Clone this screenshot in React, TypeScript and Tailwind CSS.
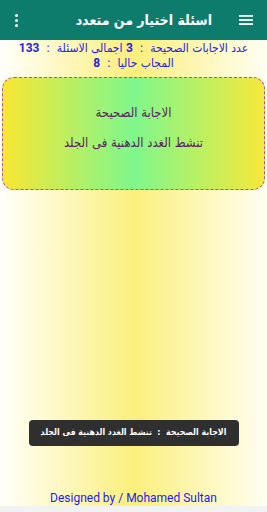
import React from "react";

export default function App() {
  const arabic = { fontFamily: '"DejaVu Sans Condensed", "DejaVu Sans", sans-serif' };
  const num = { fontFamily: "Roboto, sans-serif" };
  return (
    <div className="w-[267px] h-[512px] flex flex-col overflow-hidden" style={arabic}>
      <header dir="rtl" className="h-[40px] shrink-0 bg-[#0e7c6c] flex items-center pr-[14px] pl-[12px]">
        <svg width="14" height="10" viewBox="0 0 14 10" className="shrink-0">
          <rect x="0" y="0" width="14" height="1.8" fill="#fff" />
          <rect x="0" y="4.1" width="14" height="1.8" fill="#fff" />
          <rect x="0" y="8.2" width="14" height="1.8" fill="#fff" />
        </svg>
        <div className="mr-[27px] text-white font-bold text-[14px] leading-none whitespace-nowrap">اسئلة اختيار من متعدد</div>
        <div className="mr-auto flex flex-col gap-[2px] items-center w-[8px]">
          <span className="w-[3px] h-[3px] bg-white rounded-full" />
          <span className="w-[3px] h-[3px] bg-white rounded-full" />
          <span className="w-[3px] h-[3px] bg-white rounded-full" />
        </div>
      </header>
      <main className="flex-1 flex flex-col bg-[linear-gradient(to_right,#fffffb_0%,#fbef7c_50%,#fffef2_100%)]">
        <div dir="rtl" className="text-center text-[#2424e0] text-[12px] leading-[15px] pt-[1px] px-[4px] whitespace-nowrap">
          <div>عدد الاجابات الصحيحة &nbsp;:&nbsp; <span className="font-bold" style={num}>3</span> اجمالى الاسئلة &nbsp;:&nbsp; <span className="font-bold" style={num}>133</span></div>
          <div>المجاب حاليا &nbsp;:&nbsp; <span className="font-bold" style={num}>8</span></div>
        </div>
        <div className="mx-[2px] mt-[6px] h-[113px] rounded-[12px] border border-dashed border-[#b0529a] bg-[linear-gradient(to_right,#f9e634_0%,#7ef78c_50%,#f6e93a_100%)] flex flex-col items-center text-[#5b1f5e] text-[13px]">
          <div className="mt-[25px]">الاجابة الصحيحة</div>
          <div className="mt-[10px]">تنشط الغدد الدهنية فى الجلد</div>
        </div>
        <div className="mt-auto flex justify-center">
          <div dir="rtl" className="w-[210px] h-[26px] rounded-[4px] bg-[#2f2f2f] text-white font-bold text-[8.75px] flex items-center justify-center whitespace-nowrap">
            الاجابة الصحيحة &nbsp;:&nbsp; تنشط الغدد الدهنية فى الجلد
          </div>
        </div>
        <div className="mt-[45px] mb-[1px] text-center text-[#1c1cf0] text-[12px] leading-[14px]" style={num}>
          Designed by / Mohamed Sultan
        </div>
      </main>
      <div className="h-[6px] shrink-0 bg-[#f2f2f2]" />
    </div>
  );
}
